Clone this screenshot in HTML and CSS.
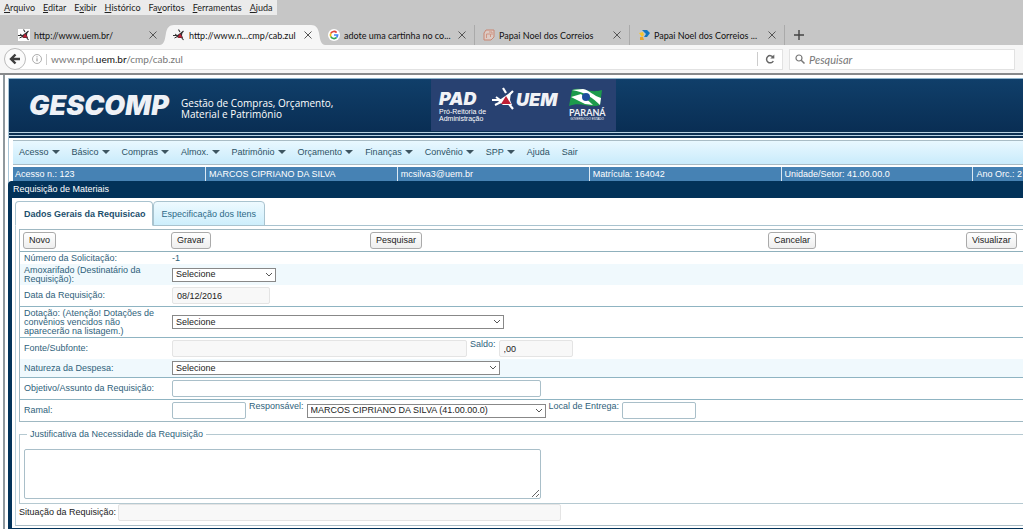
FILE: index.html
```html
<!DOCTYPE html>
<html lang="pt-BR">
<head>
<meta charset="utf-8">
<title>GESCOMP - Requisição de Materiais</title>
<link rel="stylesheet" href="styles.css">
</head>
<body>
<svg class="defs" aria-hidden="true">
  <symbol id="uem" viewBox="0 0 24 24">
    <path d="M0 13h9M4 10l4 3M3 18l6-3" fill="none" stroke="currentColor" stroke-width="2"/>
    <path d="M11 1l3 5M21 4l-6 6M21 22l-4-5" fill="none" stroke="currentColor" stroke-width="2.2"/>
    <path d="M19 5L6 14l5 4h9l-2-5z" fill="currentColor"/>
    <path d="M14 9l5 8H9z" fill="#c01f35"/>
  </symbol>
  <symbol id="close" viewBox="0 0 8 8"><path d="M0.5 0.5l7 7M7.5 0.5l-7 7" stroke="#555" fill="none"/></symbol>
</svg>
<header class="browser">
  <nav class="menubar">
    <a href="#"><u>A</u>rquivo</a><a href="#"><u>E</u>ditar</a><a href="#">E<u>x</u>ibir</a><a href="#"><u>H</u>istórico</a><a href="#">Fa<u>v</u>oritos</a><a href="#"><u>F</u>erramentas</a><a href="#"><u>A</u>juda</a>
  </nav>
  <div class="tabs">
    <div class="tab"><svg class="fav boxed"><use href="#uem"/></svg><span>http://www.uem.br/</span><button aria-label="Fechar"><svg><use href="#close"/></svg></button></div>
    <div class="tab current">
      <svg class="shape" viewBox="0 0 165 20" preserveAspectRatio="none"><path d="M0 20C5 19 5 13 6 8S9 0 14 0H151C156 0 158 3 159 8S160 19 165 20z" fill="#f6f6f6"/></svg>
      <svg class="fav"><use href="#uem"/></svg><span>http://www.n...cmp/cab.zul</span><button aria-label="Fechar"><svg><use href="#close"/></svg></button></div>
    <div class="tab line"><svg class="fav" viewBox="0 0 12 12"><circle cx="6" cy="6" r="6" fill="#fff"/><g fill="none" stroke-width="1.7"><path d="M8.6 3.6A3.6 3.6 0 0 0 2.8 4.4" stroke="#e04436"/><path d="M2.8 4.4a3.6 3.6 0 0 0 0 3.2" stroke="#f5b90e"/><path d="M2.8 7.6a3.6 3.6 0 0 0 5.8.8" stroke="#32a653"/><path d="M8.6 8.4A3.6 3.6 0 0 0 9.6 6H6" stroke="#4285f4"/></g></svg><span>adote uma cartinha no co...</span><button aria-label="Fechar"><svg><use href="#close"/></svg></button></div>
    <div class="tab line"><svg class="fav" viewBox="0 0 12 12"><path d="M3 1h8v7l-3 3H1V4z" fill="#dccbc5" stroke="#c98672"/><path d="M3.500 9V5h4v3M6 3h3v3" fill="none" stroke="#cf9583"/></svg><span>Papai Noel dos Correios</span><button aria-label="Fechar"><svg><use href="#close"/></svg></button></div>
    <div class="tab line"><svg class="fav" viewBox="0 0 12 12"><path d="M4 1h5l3 3-3 4H6l2-3z" fill="#1476bd"/><path d="M1 4l4-1 1 3-2 2z" fill="#f7c52d"/><path d="M2 8h3l1 3H2z" fill="#e9a32a"/></svg><span>Papai Noel dos Correios ...</span><button aria-label="Fechar"><svg><use href="#close"/></svg></button></div>
    <button class="newtab" aria-label="Nova aba"><svg viewBox="0 0 10 10"><path d="M5 0v10M0 5h10" stroke="#444" stroke-width="1.4"/></svg></button>
  </div>
  <div class="toolbar">
    <button class="back" aria-label="Voltar"><svg viewBox="0 0 12 12"><path d="M6.500 1.500L2 6l4.500 4.500M2.500 6H11" fill="none" stroke="#3c3c3c" stroke-width="2.400"/></svg></button>
    <div class="url">
      <svg class="info" viewBox="0 0 10 10"><circle cx="5" cy="5" r="4.500" fill="none" stroke="#999" stroke-width=".8"/><path d="M5 4.300v3M5 2.400v1" stroke="#888"/></svg>
      <a href="#">www.npd.<b>uem.br</b>/cmp/cab.zul</a>
      <button class="reload" aria-label="Recarregar"><svg viewBox="0 0 10 10"><path d="M8 3A3.600 3.600 0 1 0 8.300 7" fill="none" stroke="#666" stroke-width="1.500"/><path d="M9.300 0.500V4.500H5.300z" fill="#666"/></svg></button>
    </div>
    <label class="search"><svg viewBox="0 0 10 10"><circle cx="4" cy="4" r="3" fill="none" stroke="#777" stroke-width="1.200"/><path d="M6.200 6.200L9.500 9.500" stroke="#777" stroke-width="1.500"/></svg><input type="text" placeholder="Pesquisar" aria-label="Pesquisar"></label>
  </div>
</header>
<main class="page">
  <div class="site">
    <header class="banner">
      <div class="hero">
        <h1 class="brand">GESCOMP</h1>
        <p class="tagline">Gestão de Compras, Orçamento,<br>Material e Patrimônio</p>
        <div class="partners">
          <div class="pad"><strong>PAD</strong><small>Pró-Reitoria de<br>Administração</small></div>
          <div class="uem"><svg><use href="#uem"/></svg><strong>UEM</strong></div>
          <div class="parana">
            <svg viewBox="0 0 34 20"><path d="M3 2C12-2 20 6 33 2l-2 15C20 21 12 13 0 18z" fill="#1d9a4c"/><path d="M3 2C16 4 24 10 31 17L32 10C25 8 20 2 14 1z" fill="#fff"/><path d="M2 9l10-3 12 11-8-1z" fill="#fff"/><circle cx="17" cy="9" r="4" fill="#1f4f9d"/></svg>
            <strong>PARANÁ</strong><small>GOVERNO DO ESTADO</small>
          </div>
        </div>
      </div>
    </header>
    <nav class="nav">
      <a class="more" href="#">Acesso</a><a class="more" href="#">Básico</a><a class="more" href="#">Compras</a><a class="more" href="#">Almox.</a><a class="more" href="#">Patrimônio</a><a class="more" href="#">Orçamento</a><a class="more" href="#">Finanças</a><a class="more" href="#">Convênio</a><a class="more" href="#">SPP</a><a href="#">Ajuda</a><a href="#">Sair</a>
    </nav>
    <div class="session"><span>Acesso n.: 123</span><span>MARCOS CIPRIANO DA SILVA</span><span>mcsilva3@uem.br</span><span>Matrícula: 164042</span><span>Unidade/Setor: 41.00.00.0</span><span>Ano Orc.: 2</span></div>
    <section class="window">
      <h2>Requisição de Materiais</h2>
      <div class="body">
        <div class="formtabs"><button class="on">Dados Gerais da Requisicao</button><button>Especificação dos Itens</button></div>
        <form class="panel">
          <div class="box">
            <div class="actions"><button type="button">Novo</button><button type="button">Gravar</button><button type="button">Pesquisar</button><button type="button">Cancelar</button><button type="button">Visualizar</button></div>
            <div class="row flat"><span class="label">Número da Solicitação:</span><output>-1</output></div>
            <div class="row tint"><label class="label" for="almox">Amoxarifado (Destinatário da Requisição):</label><select id="almox" class="w-s"><option>Selecione</option></select></div>
            <div class="row ruled"><label class="label" for="data">Data da Requisição:</label><input id="data" class="w-d" type="text" value="08/12/2016" readonly></div>
            <div class="row ruled tall"><label class="label" for="dot">Dotação: (Atenção! Dotações de convênios vencidos não aparecerão na listagem.)</label><select id="dot" class="w-l"><option>Selecione</option></select></div>
            <div class="row"><label class="label" for="fonte">Fonte/Subfonte:</label><input id="fonte" class="w-f" type="text" readonly><label class="side" for="saldo">Saldo:</label><input id="saldo" class="w-n" type="text" value=",00" readonly></div>
            <div class="row tint ruled slim"><label class="label" for="nat">Natureza da Despesa:</label><select id="nat" class="w-m"><option>Selecione</option></select></div>
            <div class="row ruled"><label class="label" for="obj">Objetivo/Assunto da Requisição:</label><input id="obj" class="w-o" type="text"></div>
            <div class="row"><label class="label" for="ramal">Ramal:</label><input id="ramal" class="w-n" type="text"><label class="side" for="resp">Responsável:</label><select id="resp" class="w-r"><option>MARCOS CIPRIANO DA SILVA (41.00.00.0)</option></select><label class="side" for="local">Local de Entrega:</label><input id="local" class="w-n" type="text"></div>
          </div>
          <fieldset><legend>Justificativa da Necessidade da Requisição</legend><textarea aria-label="Justificativa da Necessidade da Requisição"></textarea></fieldset>
          <div class="status"><label for="sit">Situação da Requisição:</label><input id="sit" type="text" readonly></div>
        </form>
      </div>
    </section>
  </div>
</main>
</body>
</html>
```
FILE: styles.css
```css
* { box-sizing: border-box; }
body { margin: 0; height: 100vh; overflow: hidden; display: flex; flex-direction: column; background: #fff; color: #222; font: 9px/11px "Liberation Sans", Arial, sans-serif; }
h1, h2, p { margin: 0; font-weight: normal; }
a { color: inherit; text-decoration: none; }
button, input, select, textarea { font: inherit; color: inherit; margin: 0; }
.defs { position: absolute; width: 0; height: 0; }

/* browser chrome */
.browser { background: #c6c6c6; font-family: Lato, sans-serif; font-size: 9px; border-bottom: 2px solid #87898b; }
.browser button { background: none; border: 0; padding: 0; display: flex; }
.menubar { display: flex; gap: 8px; width: max-content; height: 15px; padding: 2px 4px; background: #ebebeb; }
.tabs { display: flex; height: 20px; margin-top: 10px; padding-left: 10px; }
.tab { position: relative; display: flex; align-items: center; width: 155px; padding: 0 8px; color: #111; }
.tab.line { border-right: 1px solid #aaa; }
.tab span { position: relative; flex: 1; margin-left: 4px; white-space: nowrap; }
.tab button { position: relative; }
.tab button svg { width: 8px; height: 8px; }
.tab .shape { position: absolute; left: -5px; top: 0; width: 165px; height: 20px; }
.fav { position: relative; width: 12px; height: 12px; color: #333; }
.fav.boxed { background: #fff; }
.newtab { align-self: center; margin-left: 9px; }
.newtab svg { width: 10px; height: 10px; }
.toolbar { display: flex; align-items: center; height: 28px; background: #f6f6f6; padding-right: 8px; }
.browser .back { position: relative; z-index: 1; width: 22px; height: 22px; margin: 0 -11px 0 4px; align-items: center; justify-content: center; border: 1px solid #bbb; border-radius: 50%; background: #fbfbfb; }
.back svg { width: 12px; height: 12px; }
.url, .search { display: flex; align-items: center; height: 21px; background: #fff; border: 1px solid #e2e2e2; }
.url { flex: 1; padding-left: 16px; font-size: 10px; color: #777; }
.url a { flex: 1; margin-left: 4px; padding-left: 4px; border-left: 1px solid #ccc; }
.url b { font-weight: normal; color: #111; }
.info { width: 10px; height: 10px; }
.browser .reload { border-left: 1px solid #ccc; padding: 2px 7px; }
.reload svg, .search svg { width: 10px; height: 10px; }
.search { width: 226px; margin-left: 6px; padding-left: 5px; }
.search input { flex: 1; min-width: 0; border: 0; padding: 0 4px; font-size: 11px; font-style: italic; }
.search input::placeholder { color: #777; }

/* site header */
.page { flex: 1; margin-left: 3px; border-left: 2px solid #8e989e; padding: 3px 0 0 3px; min-height: 0; overflow: hidden; }
.site { border-left: 1px solid #a9c6d8; }
.banner { border-top: 1px solid #8fb4cc; background: #0b2f52; padding-bottom: 1px; border-bottom: 1px solid #0b2f52; }
.hero { display: flex; height: 52px; padding-left: 20px; background: linear-gradient(#103f6a, #092e54); color: #fff; margin-bottom: 1px; }
.banner::after { content: ""; display: block; height: 2px; border: solid #b9d3e4; border-width: 1px 0; }
.brand { width: 147px; font: italic 900 27px/54px Inter, sans-serif; color: #eef1f6; }
.tagline { margin: 19px 0 0 5px; width: 250px; font: 10px/11px "Open Sans", sans-serif; white-space: nowrap; }
.partners { display: flex; width: 185px; background: #284171; padding-left: 8px; }
.partners strong { display: block; color: #f1f2f6; font: italic 900 18px/18px Inter, sans-serif; }
.pad { width: 53px; padding-top: 11px; }
.pad small { display: block; font: 7px/7px "Liberation Sans", sans-serif; white-space: nowrap; }
.uem { display: flex; width: 77px; padding-top: 8px; }
.uem svg { width: 24px; height: 24px; }
.uem strong { padding-top: 4px; }
.parana { width: 36px; padding-top: 9px; text-align: center; }
.parana svg { display: block; width: 34px; height: 20px; }
.partners .parana strong { font: bold 9px/9px Lato, sans-serif; }
.parana small { display: block; font: 3px/4px "Liberation Sans", sans-serif; white-space: nowrap; }
.nav { display: flex; align-items: center; gap: 12px; height: 25px; margin: 2px 0 0 4px; padding-left: 6px; border: solid #a9bcc5; border-width: 1px 0; background: linear-gradient(#e9f8ff, #c9ebfb); color: #2c5266; }
.more::after { content: ""; display: inline-block; margin-left: 3px; border: 4px solid transparent; border-top-color: #3d5561; border-bottom: 0; vertical-align: 1px; }
.session { display: grid; grid-auto-flow: column; grid-auto-columns: 19%; height: 14px; margin: 2px 0 0 4px; background: #4682b4; color: #fff; line-height: 14px; white-space: nowrap; }
.session span { padding-left: 2px; }
.session span + span { padding-left: 3px; border-left: 1px solid #dbe9f3; }

/* window */
.window { margin-left: -1px; border: solid #023259; border-width: 0 0 4px 4px; border-top-left-radius: 4px; background: #023259; }
.window h2 { height: 17px; padding-left: 1px; font-size: 9px; line-height: 17px; color: #fff; }
.body { background: #fff; padding: 3px 0 2px 3px; }
.formtabs { display: flex; height: 25px; border-bottom: 1px solid #a9c3cf; }
.formtabs button { height: 25px; padding: 2px 8px 0; border: 1px solid #a9c3cf; border-radius: 4px 4px 0 0; background: linear-gradient(#eefaff, #cdeefc); color: #2c6a88; }
.formtabs .on { padding: 2px 6px 0 8px; font-weight: bold; background: #fff; border-bottom-color: #fff; color: #1d4f6d; }
.panel { padding: 3px 0 4px 3px; border-left: 1px solid #b9d0da; border-bottom: 1px solid #a9bcc5; }
.box { border: 1px solid #9fb8c2; border-right: 0; color: #2f627b; }
.actions { display: grid; grid-template-columns: 148px 199px 398px 198px auto; align-items: center; justify-items: start; height: 22px; padding-left: 3px; border-bottom: 1px solid #8fb0bc; }
.actions button { height: 17px; padding: 0 5px; border: 1px solid #aaa; border-radius: 3px; background: linear-gradient(#fff, #eee); color: #222; }
.row { display: flex; align-items: center; height: 21px; padding-left: 4px; }
.row.flat { height: 12px; }
.row.ruled { height: 22px; border-bottom: 1px solid #8fb4c2; }
.row.ruled.slim { height: 19px; }
.row.ruled.tall { height: 31px; }
.tint { background: #f0f9fd; }
.label { width: 148px; padding-right: 12px; line-height: 9px; }
.side { align-self: flex-start; margin: 1px 3px 0 3px; }
input[type="text"], textarea { border: 1px solid #a9bfc9; border-radius: 2px; background: #fff; color: #222; }
.panel input { height: 17px; padding: 0 4px; }
.panel input:read-only { border-color: #e4e4e4; background: #f8f8f8; }
.browser .search input { border: 0; }
select { appearance: none; height: 14px; padding: 0 3px; border: 1px solid #888; border-radius: 0; color: #222; background: #fff url("data:image/svg+xml,%3Csvg xmlns='http://www.w3.org/2000/svg' width='8' height='6'%3E%3Cpath d='M1 1l3 3 3-3' fill='none' stroke='%23555'/%3E%3C/svg%3E") right 2px center no-repeat; }
.w-s { width: 104px; }
.w-d { width: 98px; }
.w-l { width: 332px; }
.w-m { width: 328px; }
.w-f { width: 295px; }
.w-n { width: 74px; }
.w-o { width: 369px; }
.w-r { width: 239px; }
fieldset { margin: 7px 0 0; padding: 9px 0 4px 4px; border: 1px solid #b5c9d1; border-right: 0; }
legend { margin-left: 3px; padding: 0 3px; color: #2f627b; }
textarea { display: block; width: 517px; height: 50px; }
.status { display: flex; align-items: center; }
.status input { width: 443px; margin-left: 2px; }
```
